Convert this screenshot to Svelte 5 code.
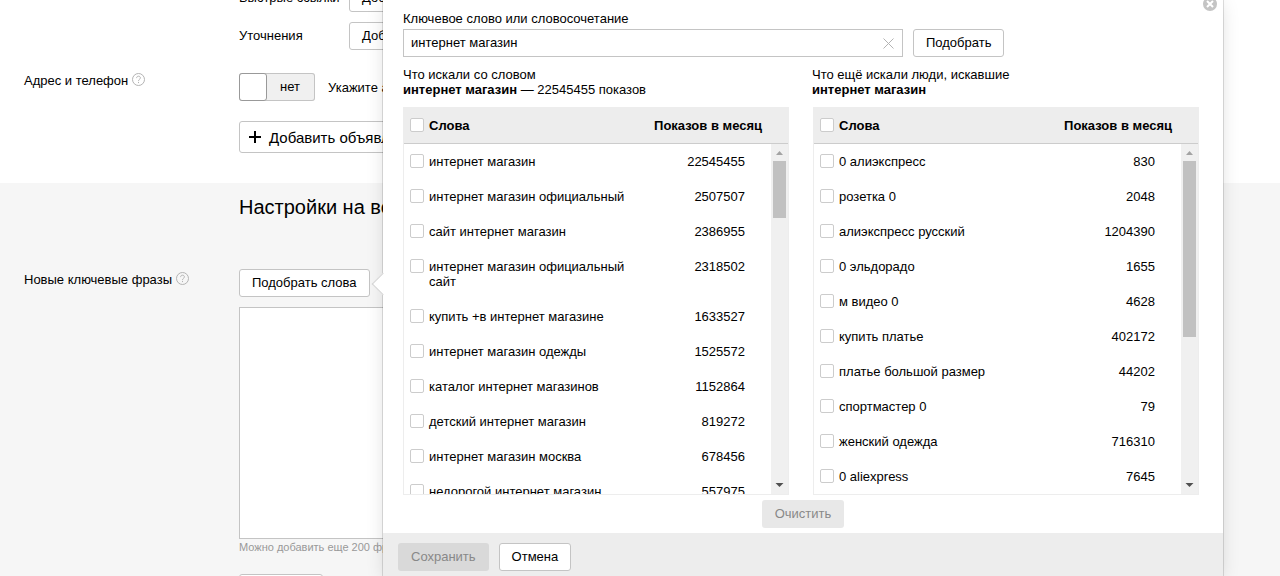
<script lang="ts">
  interface Phrase {
    text: string;
    shows: number;
  }

  interface WordList {
    id: string;
    contentHeight: number;
    rows: Phrase[];
  }

  const VIEW_HEIGHT = 350;

  const lists: WordList[] = [
    {
      id: 'with-word',
      contentHeight: 1945,
      rows: [
        { text: 'интернет магазин', shows: 22545455 },
        { text: 'интернет магазин официальный', shows: 2507507 },
        { text: 'сайт интернет магазин', shows: 2386955 },
        { text: 'интернет магазин официальный сайт', shows: 2318502 },
        { text: 'купить +в интернет магазине', shows: 1633527 },
        { text: 'интернет магазин одежды', shows: 1525572 },
        { text: 'каталог интернет магазинов', shows: 1152864 },
        { text: 'детский интернет магазин', shows: 819272 },
        { text: 'интернет магазин москва', shows: 678456 },
        { text: 'недорогой интернет магазин', shows: 557975 },
      ],
    },
    {
      id: 'also-searched',
      contentHeight: 630,
      rows: [
        { text: '0 алиэкспресс', shows: 830 },
        { text: 'розетка 0', shows: 2048 },
        { text: 'алиэкспресс русский', shows: 1204390 },
        { text: '0 эльдорадо', shows: 1655 },
        { text: 'м видео 0', shows: 4628 },
        { text: 'купить платье', shows: 402172 },
        { text: 'платье большой размер', shows: 44202 },
        { text: 'спортмастер 0', shows: 79 },
        { text: 'женский одежда', shows: 716310 },
        { text: '0 aliexpress', shows: 7645 },
      ],
    },
  ];

  let query = $state('интернет магазин');
  let addressOn = $state(false);
  let phrases = $state('');
  let checked: Record<string, boolean[]> = $state({
    'with-word': lists[0].rows.map(() => false),
    'also-searched': lists[1].rows.map(() => false),
  });

  let anyChecked = $derived(Object.values(checked).some((list) => list.some(Boolean)));

  function toggleAll(id: string, e: Event) {
    const on = (e.currentTarget as HTMLInputElement).checked;
    checked[id] = checked[id].map(() => on);
  }

  function clearAll() {
    for (const id in checked) checked[id] = checked[id].map(() => false);
  }
</script>

{#snippet help()}
  <button class="help" type="button" aria-label="Справка">
    <svg width="13" height="13" viewBox="0 0 13 13" fill="none" stroke="#b3b3b3">
      <circle cx="6.5" cy="6.5" r="6" />
      <path d="M4.6 5.1C4.6 3.9 5.4 3.2 6.5 3.2s1.9.7 1.9 1.7c0 1.4-1.9 1.5-1.9 3M6.5 8.9v1.2" />
    </svg>
  </button>
{/snippet}

<div class="page">
  <section class="ad">
    <div class="row">
      <div class="field">
        <span class="sub-label">Быстрые ссылки</span>
        <button class="btn" type="button">Добавить</button>
      </div>
    </div>
    <div class="row">
      <div class="field">
        <span class="sub-label">Уточнения</span>
        <button class="btn" type="button">Добавить</button>
      </div>
    </div>
    <div class="row address">
      <div class="label">Адрес и телефон {@render help()}</div>
      <div class="field">
        <button
          class="tumbler"
          class:on={addressOn}
          type="button"
          role="switch"
          aria-checked={addressOn}
          aria-label="Адрес и телефон"
          onclick={() => (addressOn = !addressOn)}
        >
          <span class="handle"></span>
          <span class="state">{addressOn ? 'да' : 'нет'}</span>
        </button>
        <span>Укажите адрес и телефон</span>
      </div>
    </div>
    <div class="row add-row">
      <div class="field">
        <button class="btn add" type="button">
          <svg width="12" height="12" viewBox="0 0 12 12" fill="none" stroke="#000" stroke-width="2">
            <path d="M6 0v12M0 6h12" />
          </svg>
          Добавить объявление
        </button>
      </div>
    </div>
  </section>

  <section class="group">
    <h2>Настройки на все объявления группы</h2>
    <div class="row">
      <label class="label phrases-label" for="phrases">Новые ключевые фразы {@render help()}</label>
      <div class="stack">
        <button class="btn" type="button">Подобрать слова</button>
        <textarea id="phrases" bind:value={phrases}></textarea>
        <p class="hint">Можно добавить еще 200 фраз</p>
        <button class="btn refine" type="button">Уточнить</button>
      </div>
    </div>
  </section>

  <div class="popup" role="dialog" aria-label="Подбор слов">
    <span class="tail"></span>
    <button class="close" type="button" aria-label="Закрыть">
      <svg width="14" height="14" viewBox="0 0 14 14">
        <circle cx="7" cy="7" r="7" fill="#c4c4c4" />
        <path d="M4 4l6 6M10 4l-6 6" stroke="#fff" stroke-width="2" />
      </svg>
    </button>

    <div class="content">
      <label for="query">Ключевое слово или словосочетание</label>
      <div class="search">
        <div class="input">
          <input id="query" type="text" bind:value={query} />
          <button class="clear" type="button" aria-label="Очистить поле" onclick={() => (query = '')}>
            <svg width="11" height="11" viewBox="0 0 11 11" stroke="#b3b3b3">
              <path d="M.5.5l10 10M10.5.5l-10 10" />
            </svg>
          </button>
        </div>
        <button class="btn" type="button">Подобрать</button>
      </div>

      <div class="titles">
        <div>Что искали со словом<br /><b>интернет магазин</b> — 22545455 показов</div>
        <div>Что ещё искали люди, искавшие<br /><b>интернет магазин</b></div>
      </div>

      <div class="lists">
        {#each lists as list (list.id)}
          <div class="list">
            <div class="scroll">
              <table>
                <thead>
                  <tr>
                    <th class="word">
                      <label>
                        <input type="checkbox" onchange={(e) => toggleAll(list.id, e)} />
                        Слова
                      </label>
                    </th>
                    <th class="shows">Показов в месяц</th>
                  </tr>
                </thead>
                <tbody>
                  {#each list.rows as row, i}
                    <tr>
                      <td class="word">
                        <label>
                          <input type="checkbox" bind:checked={checked[list.id][i]} />
                          {row.text}
                        </label>
                      </td>
                      <td class="shows">{row.shows}</td>
                    </tr>
                  {/each}
                </tbody>
              </table>
            </div>
            <div class="scrollbar" aria-hidden="true">
              <svg width="17" height="17" viewBox="0 0 17 17"><path d="M5 11l3.5-4 3.5 4z" fill="#a3a3a3" /></svg>
              <div class="track">
                <div class="thumb" style="height: {(VIEW_HEIGHT / list.contentHeight) * 100}%"></div>
              </div>
              <svg width="17" height="17" viewBox="0 0 17 17"><path d="M4.5 6h8l-4 4z" fill="#505050" /></svg>
            </div>
          </div>
        {/each}
      </div>
    </div>

    <div class="reset">
      <button class="btn" type="button" disabled={!anyChecked} onclick={clearAll}>Очистить</button>
    </div>

    <div class="footer">
      <button class="btn" type="button" disabled={!anyChecked}>Сохранить</button>
      <button class="btn" type="button">Отмена</button>
    </div>
  </div>
</div>

<style>
  :global(body) {
    margin: 0;
    background: #fff;
  }

  .page {
    position: relative;
    display: flex;
    flex-direction: column;
    height: 100vh;
    overflow: hidden;
    font: 13px/15px 'Liberation Sans', Arial, sans-serif;
    color: #000;
  }

  button,
  input,
  textarea {
    box-sizing: border-box;
    margin: 0;
    font: inherit;
    color: inherit;
  }

  button {
    padding: 0;
    border: 0;
    background: none;
    cursor: pointer;
  }

  svg {
    display: block;
  }

  .btn {
    height: 28px;
    padding: 0 12px 2px;
    border: 1px solid #c4c4c4;
    border-radius: 3px;
    background: #fff;
    white-space: nowrap;
  }

  .btn:disabled {
    border-color: transparent;
    background: #e8e8e8;
    color: #888;
    cursor: default;
  }

  /* Form behind the popup */
  .ad {
    display: flex;
    flex-direction: column;
    gap: 10px;
    margin-top: -16px;
    padding-bottom: 30px;
  }

  .row {
    display: grid;
    grid-template-columns: 215px 1fr;
    padding-left: 24px;
  }

  .label {
    grid-column: 1;
  }

  .field {
    grid-column: 2;
    display: flex;
    align-items: center;
  }

  .sub-label {
    width: 110px;
    padding-bottom: 2px;
  }

  .address {
    margin-top: 13px;
  }

  .add-row {
    margin-top: 10px;
  }

  .help {
    vertical-align: -1px;
  }

  .tumbler {
    display: flex;
    width: 76px;
    height: 28px;
    margin-right: 13px;
    border-radius: 3px;
    background: #f0f0f0;
    box-shadow: inset 0 0 0 1px #c4c4c4;
    line-height: 28px;
  }

  .tumbler.on {
    flex-direction: row-reverse;
    background: #ffeba0;
  }

  .handle {
    box-sizing: border-box;
    width: 28px;
    height: 28px;
    border: 1px solid #999;
    border-radius: 3px;
    background: #fff;
  }

  .state {
    flex: 1;
    padding-right: 2px;
  }

  .add {
    display: flex;
    align-items: center;
    gap: 8px;
    height: 32px;
    padding: 0 9px;
    font-size: 15px;
  }

  .group {
    flex: 1;
    background: #f6f6f6;
  }

  h2 {
    margin: 0 0 50px;
    padding: 12px 0 0 239px;
    font-size: 20px;
    font-weight: 400;
    line-height: 24px;
  }

  .phrases-label {
    padding-top: 3px;
  }

  .stack {
    display: flex;
    flex-direction: column;
    align-items: flex-start;
  }

  textarea {
    width: 600px;
    height: 232px;
    margin-top: 10px;
    padding: 8px;
    border: 1px solid #c4c4c4;
    background: #fff;
    resize: none;
  }

  .hint {
    margin: 0;
    font-size: 11px;
    line-height: 16px;
    color: #999;
  }

  .refine {
    min-width: 84px;
    margin-top: 19px;
  }

  /* Popup */
  .popup {
    position: absolute;
    top: -9px;
    left: 383px;
    right: 57px;
    bottom: 0;
    display: flex;
    flex-direction: column;
    background: #fff;
    box-shadow: 0 0 0 1px rgba(0, 0, 0, 0.12), 0 8px 20px -5px rgba(0, 0, 0, 0.2);
  }

  .tail {
    position: absolute;
    top: 285px;
    left: -8px;
    box-sizing: border-box;
    width: 16px;
    height: 16px;
    border: 1px solid #d4d4d4;
    border-width: 0 0 1px 1px;
    background: #fff;
    transform: rotate(45deg);
  }

  .close {
    position: absolute;
    top: 6px;
    right: 6px;
  }

  .content {
    padding: 20px 24px 0 20px;
  }

  .content > label {
    display: block;
    margin-bottom: 3px;
  }

  .search {
    display: flex;
    gap: 10px;
  }

  .input {
    display: flex;
    align-items: center;
    box-sizing: border-box;
    width: 500px;
    height: 28px;
    padding: 0 8px 0 7px;
    border: 1px solid #c4c4c4;
  }

  .input input {
    flex: 1;
    padding: 0 0 2px;
    border: 0;
    outline: none;
    background: none;
  }

  .titles {
    display: grid;
    grid-template-columns: 1fr 1fr;
    gap: 22px;
    margin: 10px 0;
  }

  .lists {
    display: grid;
    grid-template-columns: 1fr 1fr;
    gap: 24px;
  }

  .list {
    position: relative;
    border: 1px solid #ededed;
    border-top: 0;
  }

  .scroll {
    height: 387px;
    overflow-y: auto;
    scrollbar-width: none;
  }

  table {
    width: 100%;
    border-spacing: 0;
    table-layout: fixed;
  }

  thead {
    position: sticky;
    top: 0;
    z-index: 1;
  }

  th {
    padding: 11px 0 10px;
    border-bottom: 1px solid #ccc;
    background: #ededed;
    font-weight: 700;
  }

  td {
    padding: 10px 0;
    vertical-align: top;
  }

  .word {
    width: 240px;
    padding-left: 6px;
    text-align: left;
  }

  .word label {
    display: flex;
    align-items: flex-start;
    gap: 5px;
  }

  th.shows {
    padding-right: 26px;
    text-align: right;
  }

  td.shows {
    padding-right: 43px;
    text-align: right;
  }

  input[type='checkbox'] {
    appearance: none;
    flex: none;
    width: 14px;
    height: 14px;
    border: 1px solid #ccc;
    border-radius: 2px;
    background: #fff;
  }

  input[type='checkbox']:checked {
    background: #ffdb4d;
  }

  .scrollbar {
    position: absolute;
    top: 37px;
    right: 0;
    bottom: 0;
    display: flex;
    flex-direction: column;
    width: 17px;
    background: #f0f0f0;
  }

  .track {
    flex: 1;
    padding: 0 2px;
  }

  .thumb {
    background: #c1c1c1;
  }

  .reset {
    padding: 5px 0;
    text-align: center;
  }

  .footer {
    flex: 1;
    display: flex;
    gap: 10px;
    padding: 10px 15px;
    background: #ededed;
  }

  .footer .btn:disabled {
    background: #d9d9d9;
  }
</style>
